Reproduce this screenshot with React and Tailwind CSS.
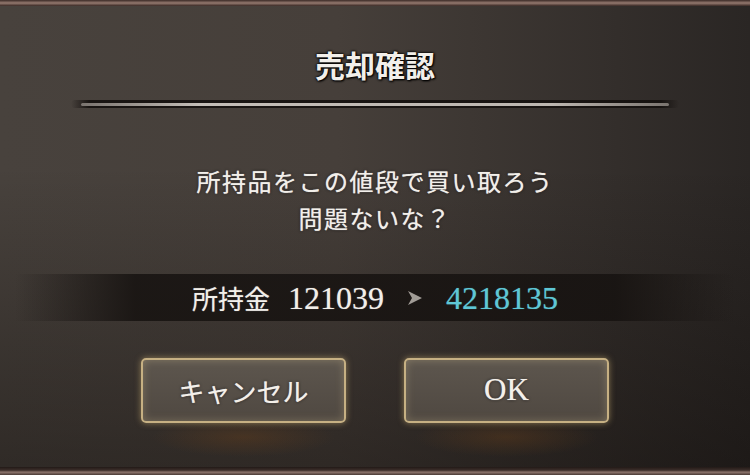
export default function App() {
  return (
    <div className="relative flex h-[475px] w-[750px] flex-col overflow-hidden bg-[linear-gradient(to_bottom,rgba(0,0,0,0)_35%,rgba(10,6,4,0.4)),linear-gradient(to_right,#48423d,#463f3a_45%,#2a2624)] font-['Noto_Sans_CJK_JP',sans-serif] text-[#f2efea]">
      <div className="h-[6px] w-full bg-[linear-gradient(to_bottom,#3b2a26,#957a70_50%,#3a2925)]" />

      <div className="flex flex-1 flex-col items-center">
        <h1 className="mt-[43px] text-[30px] leading-[30px] font-bold [text-shadow:0_0_2px_#000,0_0_3px_#000,1px_1px_2px_#000]">
          売却確認
        </h1>

        <div className="mt-[21px] flex h-[8px] w-[608px] items-center justify-center rounded-full bg-[linear-gradient(to_right,rgba(20,16,14,0),rgba(20,16,14,0.9)_3%,rgba(20,16,14,0.9)_97%,rgba(20,16,14,0))]">
          <div className="h-[3px] w-[588px] rounded-full bg-[linear-gradient(to_right,#7a746f,#c4beb8_20%,#bdb7b1_80%,#7a746f)]" />
        </div>

        <div className="mt-[54px] text-center text-[24px] leading-[37px] tracking-[1.5px] [text-shadow:0_0_1px_rgba(255,255,255,0.7),0_0_3px_rgba(0,0,0,0.8)]">
          <p>所持品をこの値段で買い取ろう</p>
          <p>問題ないな？</p>
        </div>

        <div className="mt-[38px] flex h-[47px] w-full items-center justify-center bg-[linear-gradient(to_right,rgba(22,18,16,0)_2%,rgba(22,18,16,0.85)_18%,rgba(22,18,16,0.85)_82%,rgba(22,18,16,0)_98%)] [text-shadow:0_0_1px_rgba(255,255,255,0.5)]">
          <span className="text-[26px]">所持金</span>
          <span className="ml-[18px] font-['Liberation_Serif',serif] text-[32px] leading-none">121039</span>
          <svg className="ml-[24px]" width="14" height="14" viewBox="0 0 14 14">
            <polygon points="0,0 14,7 0,14 4,7" fill="#a19c96" />
          </svg>
          <span className="ml-[24px] font-['Liberation_Serif',serif] text-[32px] leading-none text-[#5ec7d6] [text-shadow:0_0_1px_rgba(94,199,214,0.6)]">4218135</span>
        </div>

        <div className="mt-[37px] flex gap-[58px]">
          <Button>
            <span className="text-[26px] [text-shadow:0_0_1px_rgba(255,255,255,0.7),0_0_3px_rgba(0,0,0,0.8)]">キャンセル</span>
          </Button>
          <Button>
            <span className="font-['Liberation_Serif',serif] text-[31px] [text-shadow:0_0_1px_rgba(255,255,255,0.6),0_0_3px_rgba(0,0,0,0.8)]">OK</span>
          </Button>
        </div>
      </div>

      <div className="absolute right-0 bottom-0 left-0 h-[8px] bg-[linear-gradient(to_bottom,#221a17,#3c2e2a_40%,#8c746c_65%,#4a3a35)]" />
    </div>
  );
}

function Button({ children }) {
  return (
    <div className="relative">
      <div className="absolute -bottom-[34px] left-[10px] h-[40px] w-[185px] rounded-full bg-[radial-gradient(ellipse_at_center,rgba(110,65,25,0.35),rgba(110,65,25,0)_70%)]" />
      <button className="relative flex h-[65px] w-[205px] items-center justify-center rounded-[5px] border-2 border-[#c6b083] bg-[linear-gradient(to_bottom,#5d564e,#4f4841)] text-[#f4f0ea] shadow-[0_0_6px_rgba(214,184,120,0.55),inset_0_0_8px_rgba(255,230,170,0.25)]">
        {children}
      </button>
    </div>
  );
}
